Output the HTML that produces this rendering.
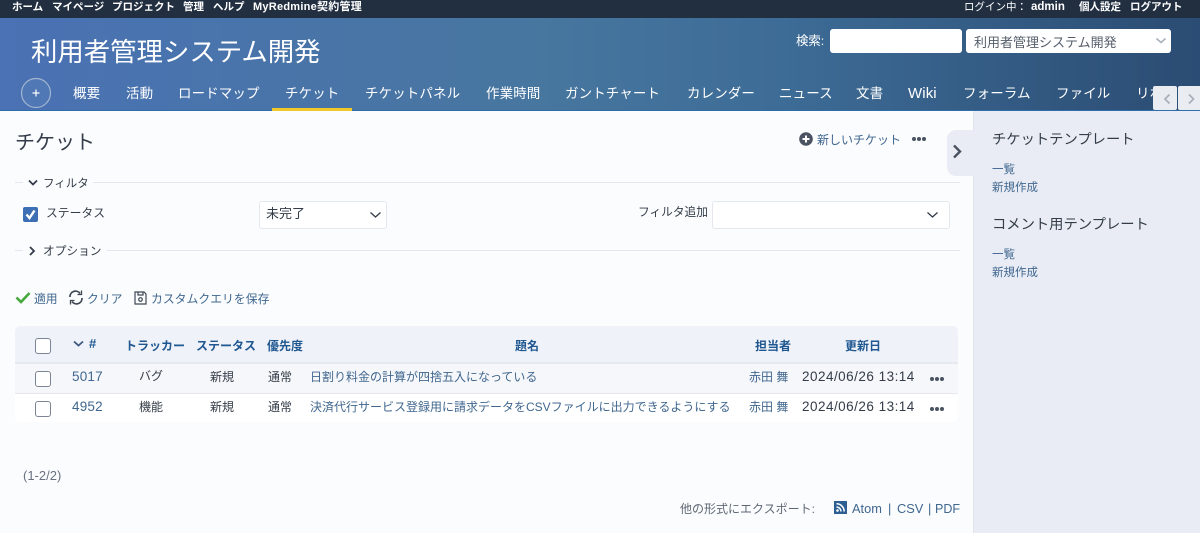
<!DOCTYPE html>
<html lang="ja"><head><meta charset="utf-8"><style>
html,body{margin:0;padding:0}
body{width:1200px;height:533px;position:relative;overflow:hidden;background:#fbfcfe;font-family:"Liberation Sans","Noto Sans CJK JP",sans-serif;color:#333c48;font-size:12px}
.t{position:absolute;white-space:nowrap;line-height:16px}
.l{color:#40678f}
.b{font-weight:700;color:#fff;font-size:10.5px;top:-2px}
.n{color:#fff;font-size:13.5px;top:85px;line-height:18px;letter-spacing:.1px}
.h{font-weight:700;color:#1f5791;font-size:12px;top:338px}
.c{position:absolute;width:14px;height:14px;border:1px solid #7c8594;border-radius:3px;background:#fff;left:35px}
.r{position:absolute;font-size:12px;white-space:nowrap;line-height:16px}
.d{font-size:13.5px;letter-spacing:.48px}
.hr{position:absolute;height:1px;background:#e3e7ef}
</style></head><body>
<div style="position:absolute;left:0;top:0;width:1200px;height:18px;background:#212f41"></div>
<div style="position:absolute;left:0;top:18px;width:1200px;height:93px;background:linear-gradient(90deg,#4a72b4 0%,#47769f 45%,#3d6c96 65%,#2b4c73 100%)"></div>
<div style="position:absolute;left:0;top:110px;width:1200px;height:1px;background:#2e6da8"></div>
<span class="t b" style="left:12px;top:-1px">ホーム</span><span class="t b" style="left:52px;top:-1px">マイページ</span><span class="t b" style="left:112px;top:-1px">プロジェクト</span><span class="t b" style="left:183px;top:-1px">管理</span><span class="t b" style="left:213px;top:-1px">ヘルプ</span><span class="t b" style="left:253px;top:-1px;font-size:11px;letter-spacing:.25px">MyRedmine契約管理</span>
<span class="t b" style="left:964px;top:-1px;font-weight:400">ログイン中：</span><span class="t b" style="left:1031px;top:-1px;font-size:11.5px">admin</span><span class="t b" style="left:1079px;top:-1px">個人設定</span><span class="t b" style="left:1130px;top:-1px">ログアウト</span>
<span class="t" style="left:31px;top:36px;color:#fff;font-size:26.4px;line-height:32px">利用者管理システム開発</span>
<span class="t" style="left:796px;top:33px;color:#fff;font-size:12.400px">検索:</span>
<div style="position:absolute;left:830px;top:29px;width:132px;height:24px;background:#fff;border-radius:3px"></div>
<div style="position:absolute;left:966px;top:29px;width:205px;height:24px;background:#fff;border-radius:3px"></div>
<span class="t" style="left:974px;top:35px;color:#555e6b;font-size:13px">利用者管理システム開発</span>
<svg style="position:absolute;left:1155px;top:37px" width="12" height="8"><path d="M1.500 1.500L6 5.500L10.500 1.500" fill="none" stroke="#a9b2bd" stroke-width="1.600"/></svg>
<svg style="position:absolute;left:20px;top:77px" width="32" height="32"><circle cx="16" cy="16" r="14.500" fill="#5d83b8" fill-opacity=".35" stroke="#a3b5d2" stroke-width="1.200"/><path d="M16 12.500V19.500M12.500 16H19.500" stroke="#fff" stroke-width="1.200"/></svg>
<span class="t n" style="left:73px">概要</span><span class="t n" style="left:126px">活動</span><span class="t n" style="left:178px">ロードマップ</span><span class="t n" style="left:285px">チケット</span><span class="t n" style="left:365px">チケットパネル</span><span class="t n" style="left:486px">作業時間</span><span class="t n" style="left:565px">ガントチャート</span><span class="t n" style="left:687px">カレンダー</span><span class="t n" style="left:779px">ニュース</span><span class="t n" style="left:856px">文書</span><span class="t n" style="left:908px;font-size:15px">Wiki</span><span class="t n" style="left:963px">フォーラム</span><span class="t n" style="left:1056px">ファイル</span><span class="t n" style="left:1136px">リポジトリ</span>
<div style="position:absolute;left:272px;top:108px;width:80px;height:3px;background:#f0c828"></div>
<div style="position:absolute;left:1153px;top:86px;width:24px;height:24px;background:#e9ecf1;border-radius:2px"></div>
<div style="position:absolute;left:1178px;top:86px;width:22px;height:24px;background:#e9ecf1;border-radius:2px 0 0 2px"></div>
<svg style="position:absolute;left:1160px;top:92px" width="40" height="14"><path d="M9.500 2.500L5 7L9.500 11.500M29 2.500L33.500 7L29 11.500" fill="none" stroke="#a8afbb" stroke-width="1.700"/></svg>
<div style="position:absolute;left:973px;top:111px;width:227px;height:422px;background:#e9ecf4;border-left:1px solid #e2e5ee;box-sizing:border-box"></div>
<div style="position:absolute;left:947px;top:130px;width:27px;height:46px;background:#e9ecf4;border-radius:9px 0 0 9px"></div>
<svg style="position:absolute;left:951px;top:144px" width="14" height="15"><path d="M3 1.500L9 7.500L3 13.500" fill="none" stroke="#4a5361" stroke-width="2.400"/></svg>
<span class="t" style="left:992px;top:131px;font-size:14.300px;line-height:18px">チケットテンプレート</span>
<span class="t l" style="left:992px;top:162px;font-size:11.500px">一覧</span><span class="t l" style="left:992px;top:180px;font-size:11.500px">新規作成</span>
<span class="t" style="left:992px;top:216px;font-size:14.300px;line-height:18px">コメント用テンプレート</span>
<span class="t l" style="left:992px;top:247px;font-size:11.500px">一覧</span><span class="t l" style="left:992px;top:265px;font-size:11.500px">新規作成</span>
<span class="t" style="left:15px;top:131px;font-size:20px;line-height:24px">チケット</span>
<svg style="position:absolute;left:799px;top:132px" width="15" height="15"><circle cx="7" cy="7" r="6.800" fill="#4a5361"/><path d="M7 3.500V10.500M3.500 7H10.500" stroke="#fff" stroke-width="2"/></svg>
<span class="t l" style="left:817px;top:132px">新しいチケット</span>
<svg style="position:absolute;left:911px;top:135px" width="16" height="8" fill="#4a5361"><circle cx="3" cy="4" r="2"/><circle cx="8" cy="4" r="2"/><circle cx="13" cy="4" r="2"/></svg>
<div class="hr" style="left:15px;top:182px;width:945px"></div><div style="position:absolute;left:23px;top:176px;width:70px;height:14px;background:#fbfcfe"></div>
<svg style="position:absolute;left:28px;top:179px" width="10" height="8"><path d="M1 1.500L5 5.500L9 1.500" fill="none" stroke="#333c48" stroke-width="1.800"/></svg>
<span class="t" style="left:43px;top:176px;font-size:11.500px">フィルタ</span>
<div style="position:absolute;left:23px;top:207px;width:15px;height:15px;background:#3d6fb5;border-radius:2px"></div>
<svg style="position:absolute;left:23px;top:207px" width="15" height="15"><path d="M3.500 7.500L6.500 11L11.500 3.500" fill="none" stroke="#fff" stroke-width="2.400"/></svg>
<span class="t" style="left:46px;top:205px;font-size:11.800px">ステータス</span>
<div style="position:absolute;left:259px;top:201px;width:128px;height:28px;box-sizing:border-box;background:#fff;border:1px solid #e4e7ee;border-radius:3px"></div>
<span class="t" style="left:266px;top:206px;font-size:13px">未完了</span>
<svg style="position:absolute;left:369px;top:211px" width="13" height="8"><path d="M1.500 1.500L6.500 6L11.500 1.500" fill="none" stroke="#333c48" stroke-width="1.300"/></svg>
<span class="t" style="left:638px;top:205px;font-size:11.700px">フィルタ追加</span>
<div style="position:absolute;left:712px;top:201px;width:238px;height:28px;box-sizing:border-box;background:#fff;border:1px solid #e4e7ee;border-radius:3px"></div>
<svg style="position:absolute;left:926px;top:211px" width="13" height="8"><path d="M1.500 1.500L6.500 6L11.500 1.500" fill="none" stroke="#333c48" stroke-width="1.300"/></svg>
<div class="hr" style="left:15px;top:250px;width:945px"></div><div style="position:absolute;left:23px;top:244px;width:84px;height:14px;background:#fbfcfe"></div>
<svg style="position:absolute;left:28px;top:246px" width="8" height="10"><path d="M2 1L6 5L2 9" fill="none" stroke="#333c48" stroke-width="1.800"/></svg>
<span class="t" style="left:43px;top:244px;font-size:11.700px">オプション</span>
<svg style="position:absolute;left:15px;top:291px" width="16" height="13"><path d="M1.500 6.500L6 11L14.500 2" fill="none" stroke="#45a83c" stroke-width="2.600"/></svg>
<span class="t l" style="left:34px;top:291px;font-size:11.800px">適用</span>
<svg style="position:absolute;left:68px;top:290px" width="16" height="15" fill="none" stroke="#3f4854" stroke-width="1.700"><path d="M2 7A5.500 5.500 0 0 1 12 3.500M14 8A5.500 5.500 0 0 1 4 11.500"/><path d="M13.500 .5V4.500H9.500M2.500 14.500V10.500H6.500" stroke-width="1.300"/></svg>
<span class="t l" style="left:87px;top:291px;font-size:11.800px">クリア</span>
<svg style="position:absolute;left:134px;top:291px" width="13" height="14" fill="none" stroke="#3f4854" stroke-width="1.200"><path d="M1 1H10L12 3V13H1Z"/><path d="M4 1V4H9V1"/><circle cx="6.500" cy="8.500" r="1.800"/></svg>
<span class="t l" style="left:151px;top:291px;font-size:11.850px">カスタムクエリを保存</span>
<div style="position:absolute;left:15px;top:326px;width:943px;height:96px;background:#fff;border-radius:5px;overflow:hidden">
<div style="position:absolute;left:0;top:0;width:943px;height:36px;background:#eff2f8;border-bottom:2px solid #e6e9f0"></div>
<div style="position:absolute;left:0;top:38px;width:943px;height:29px;background:#f6f7fa;border-bottom:1px solid #e6e8ed"></div>
</div>
<div class="c" style="top:338px"></div><div class="c" style="top:371px"></div><div class="c" style="top:401px"></div>
<svg style="position:absolute;left:73px;top:340px" width="11" height="8"><path d="M1 1.500L5.500 5.500L10 1.500" fill="none" stroke="#3f5a80" stroke-width="1.800"/></svg>
<span class="t h" style="left:89px;top:336px;font-size:13px">#</span><span class="t h" style="left:125px">トラッカー</span><span class="t h" style="left:196px">ステータス</span><span class="t h" style="left:267px">優先度</span><span class="t h" style="left:515px">題名</span><span class="t h" style="left:755px">担当者</span><span class="t h" style="left:845px">更新日</span>
<span class="r l d" style="left:72px;top:369px;letter-spacing:.2px">5017</span><span class="r" style="left:139px;top:368px">バグ</span><span class="r" style="left:210px;top:369px">新規</span><span class="r" style="left:268px;top:369px">通常</span><span class="r l" style="left:310px;top:369px">日割り料金の計算が四捨五入になっている</span><span class="r l" style="left:749px;top:369px">赤田 舞</span><span class="r d" style="left:802px;top:369px">2024/06/26 13:14</span>
<span class="r l d" style="left:72px;top:399px;letter-spacing:.2px">4952</span><span class="r" style="left:139px;top:399px">機能</span><span class="r" style="left:210px;top:399px">新規</span><span class="r" style="left:268px;top:399px">通常</span><span class="r l" style="left:310px;top:399px">決済代行サービス登録用に請求データをCSVファイルに出力できるようにする</span><span class="r l" style="left:749px;top:399px">赤田 舞</span><span class="r d" style="left:802px;top:399px">2024/06/26 13:14</span>
<svg style="position:absolute;left:929px;top:375px" width="16" height="8" fill="#4a5361"><circle cx="3" cy="4" r="2"/><circle cx="8" cy="4" r="2"/><circle cx="13" cy="4" r="2"/></svg>
<svg style="position:absolute;left:929px;top:405px" width="16" height="8" fill="#4a5361"><circle cx="3" cy="4" r="2"/><circle cx="8" cy="4" r="2"/><circle cx="13" cy="4" r="2"/></svg>
<span class="t" style="left:23px;top:468px;font-size:13px;color:#6a7280">(1-2/2)</span>
<span class="t" style="left:680px;top:501px;color:#5f6875;font-size:12px">他の形式にエクスポート:</span>
<svg style="position:absolute;left:834px;top:501px" width="13" height="13"><rect width="13" height="13" fill="#2d5f93"/><g fill="none" stroke="#fff" stroke-width="1.500"><path d="M2.500 6A4.500 4.500 0 0 1 7 10.500M2.500 2.800A7.700 7.700 0 0 1 10.200 10.500"/></g><circle cx="3.500" cy="9.500" r="1.300" fill="#fff"/></svg>
<span class="t l" style="left:852px;top:501px;font-size:12.800px">Atom</span><span class="t l" style="left:888px;top:501px;font-size:12.800px">|</span><span class="t l" style="left:897px;top:501px;font-size:12.800px">CSV</span><span class="t l" style="left:928px;top:501px;font-size:12.800px">|</span><span class="t l" style="left:935px;top:501px;font-size:12.500px">PDF</span>
</body></html>
